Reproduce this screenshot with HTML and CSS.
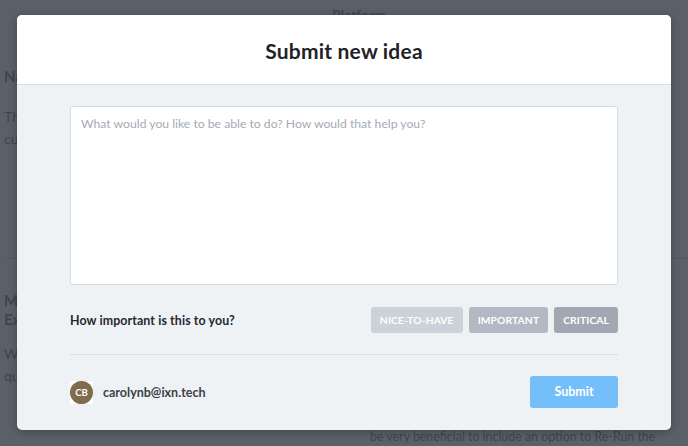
FILE: index.html
```html
<!DOCTYPE html>
<html>
<head>
<meta charset="utf-8">
<link rel="stylesheet" href="styles.css">
</head>
<body>
<div class="page">
  <div class="page-title">Platform</div>
  <div class="page-cols">
    <div class="col-left">
      <div class="bg-head">Name</div>
      <div class="bg-text">The</div>
      <div class="bg-text">cu</div>
      <div class="bg-rule"></div>
      <div class="bg-head bg-head2">Me<br>Ex</div>
      <div class="bg-text">We</div>
      <div class="bg-text">qu</div>
    </div>
    <div class="col-right">
      <div class="bg-text bg-last">be very beneficial to include an option to Re-Run the</div>
    </div>
  </div>
</div>

<div class="modal">
  <div class="modal-header">
    <h1 class="modal-title">Submit new idea</h1>
  </div>
  <div class="modal-body">
    <div class="textarea">What would you like to be able to do? How would that help you?</div>
    <div class="importance">
      <div class="imp-label">How important is this to you?</div>
      <div class="imp-buttons">
        <span class="imp-btn imp-low">NICE-TO-HAVE</span>
        <span class="imp-btn imp-mid">IMPORTANT</span>
        <span class="imp-btn imp-high">CRITICAL</span>
      </div>
    </div>
    <div class="divider"></div>
    <div class="footer">
      <div class="user">
        <span class="avatar-box"><span class="avatar">CB</span></span>
        <span class="email">carolynb@ixn.tech</span>
      </div>
      <span class="submit">Submit</span>
    </div>
  </div>
</div>
</body>
</html>
```

FILE: styles.css
```css
html, body {
  margin: 0;
  padding: 0;
  width: 688px;
  height: 446px;
  overflow: hidden;
  background: #5a6068;
  font-family: "Lato", "Open Sans", sans-serif;
}

.page {
  position: relative;
  width: 688px;
  height: 446px;
  color: #40454c;
}

.page-title {
  text-align: center;
  padding-top: 6px;
  font-size: 14px;
  font-weight: 700;
  padding-left: 30px;
}

.page-cols {
  display: grid;
  grid-template-columns: 366px 1fr;
}

.col-left {
  padding-left: 4px;
  padding-top: 44px;
}

.bg-head {
  font-size: 15px;
  font-weight: 700;
  line-height: 19px;
  margin-bottom: 20px;
}

.bg-head2 {
  margin-top: 32px;
  margin-bottom: 14px;
}

.bg-text {
  font-size: 14px;
  line-height: 22px;
}

.bg-rule {
  height: 1px;
  background: #52585f;
  margin-top: 108px;
  width: 688px;
}

.col-right {
  padding-left: 4px;
  padding-top: 404px;
}

.bg-last {
  white-space: nowrap;
  font-size: 12.4px;
  line-height: 20px;
}

.modal {
  position: absolute;
  left: 17px;
  top: 15px;
  width: 654px;
  height: 415px;
  border-radius: 5px;
  overflow: hidden;
  background: #eef2f5;
  box-shadow: 0 2px 8px rgba(0,0,0,0.25);
  display: flex;
  flex-direction: column;
}

.modal-header {
  height: 69px;
  background: #ffffff;
  border-bottom: 1px solid #d9dfe5;
  display: flex;
  align-items: center;
  justify-content: center;
  flex-shrink: 0;
}

.modal-title {
  margin: 0;
  font-size: 21px;
  font-weight: 700;
  color: #1f2226;
  letter-spacing: 0.2px;
  padding-top: 2px;
}

.modal-body {
  padding: 21px 53px 0 53px;
  display: flex;
  flex-direction: column;
}

.textarea {
  height: 179px;
  box-sizing: border-box;
  background: #ffffff;
  border: 1px solid #d4dae0;
  border-radius: 3px;
  padding: 9px 10px;
  font-size: 12.2px;
  color: #a3abb5;
}

.importance {
  margin-top: 22px;
  display: flex;
  align-items: center;
  justify-content: space-between;
  height: 26px;
}

.imp-label {
  font-size: 12.4px;
  font-weight: 700;
  color: #26292e;
  letter-spacing: 0.1px;
}

.imp-buttons {
  display: flex;
  gap: 6px;
}

.imp-btn {
  height: 26px;
  line-height: 26px;
  padding: 0 9px;
  border-radius: 3px;
  color: #ffffff;
  font-size: 10.3px;
  font-weight: 700;
  letter-spacing: 0.1px;
}

.imp-low { background: #cbd2d9; }
.imp-mid { background: #b2b9c2; }
.imp-high { background: #a1a8b1; }

.divider {
  height: 1px;
  background: #d9dfe5;
  margin-top: 21px;
}

.footer {
  margin-top: 21px;
  display: flex;
  justify-content: space-between;
  align-items: center;
  height: 32px;
}

.user {
  display: flex;
  align-items: center;
  gap: 10px;
}

.avatar-box {
  width: 23px;
  height: 23px;
  background: #ffffff;
  display: flex;
}

.avatar {
  width: 23px;
  height: 23px;
  border-radius: 50%;
  background: #7f6b4e;
  color: #ffffff;
  font-size: 9.5px;
  font-weight: 700;
  display: flex;
  align-items: center;
  justify-content: center;
}

.email {
  font-size: 12.5px;
  font-weight: 700;
  color: #3c4148;
}

.submit {
  width: 88px;
  height: 32px;
  line-height: 32px;
  text-align: center;
  border-radius: 3px;
  background: #74befa;
  color: #ffffff;
  font-size: 12.5px;
  font-weight: 700;
}
```
